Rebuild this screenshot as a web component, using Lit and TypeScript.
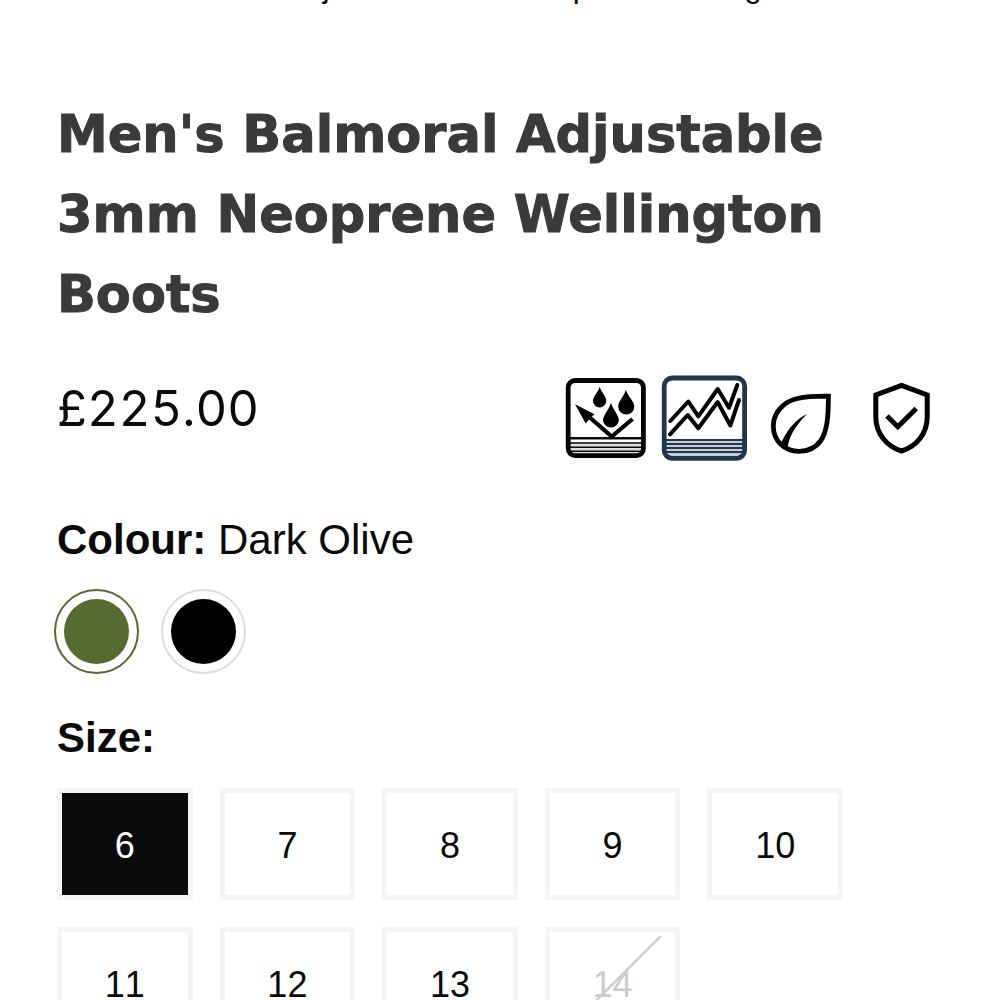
import { LitElement, html, css, svg } from "lit";
import { customElement, state } from "lit/decorators.js";

const COLOURS = [
  { name: "Dark Olive", cls: "olive" },
  { name: "Black", cls: "black" },
];

const SIZES = [
  { label: "6" }, { label: "7" }, { label: "8" }, { label: "9" }, { label: "10" },
  { label: "11" }, { label: "12" }, { label: "13" }, { label: "14", soldOut: true },
];

const waterproof = svg`
  <rect x="7" y="68" width="72" height="13" fill="#dcdcdc" />
  <path d="M5 69H80M5 73.3H80M5 77.3H80" stroke="#0a0a0a" stroke-width="1.4" />
  <path d="M5 64.3H80" stroke="#0a0a0a" stroke-width="2.6" />
  <rect x="5.2" y="6.5" width="75.2" height="75.2" rx="7" fill="none" stroke="#050505" stroke-width="4.8" />
  <path d="M36.7 12.7C38 18 43.3 22 43.3 27A6.6 6.4 0 0 1 30 27C30 22 35.4 18 36.7 12.7Z" />
  <path d="M62.9 15.7C64.5 22 71.3 27 71.3 32.6A8 7.8 0 0 1 55.2 32.6C55.2 27 61.3 22 62.9 15.7Z" />
  <path d="M48 28.7C49.6 35 55.9 41 55.9 46.6A8 7.8 0 0 1 40 46.6C40 41 46.4 35 48 28.7Z" />
  <path d="M12 30.3L31.5 40.2L27.8 43.2L22.7 49.5Z" />
  <path d="M25 42L48.7 62.5L69.5 45" fill="none" stroke="#000" stroke-width="4.2" />`;

const layers = svg`
  <rect x="5" y="66" width="77" height="17" fill="#c3ced8" />
  <path d="M5 66H82M5 70H82M5 74H82M5 78H82" stroke="#22384a" stroke-width="1.8" />
  <rect x="3.2" y="4" width="80.4" height="80.4" rx="8" fill="none" stroke="#20364a" stroke-width="4.8" />
  <path d="M9.3 47L27.3 27.5L37.3 42.3L56.7 15L68 33.7L76.3 11M9 60.3L26.7 41L37.3 54.3L56.7 28L69.3 51.5L78 26"
    fill="none" stroke="#000" stroke-width="4" stroke-linecap="round" stroke-linejoin="round" />`;

const leaf = svg`
  <path d="M69.4 22.2C42 22 30 25 22.5 33C17 38.5 14.3 44.5 14.3 52C14.3 67 25.5 77.3 40 77.3C49 77.3 56.5 74 61.5 67C68 58 69.4 44 69.4 22.2Z"
    fill="none" stroke="#000" stroke-width="4.8" />
  <path d="M48 40C38 45 30 53 23 67L20 71L28.5 75C29.5 64 35 53 48 40Z" />`;

const shield = svg`
  <path d="M44.5 11.4L70.2 21V43C70.2 59 60 72.5 44.5 77C29.2 72.5 18.8 59 18.8 43V21Z"
    fill="none" stroke="#000" stroke-width="5" />
  <path d="M30 42L40.8 52.8L59.2 34.4" fill="none" stroke="#000" stroke-width="5" />`;

const FEATURES = [
  { name: "Waterproof", art: waterproof },
  { name: "Insulated layers", art: layers },
  { name: "Eco friendly", art: leaf },
  { name: "Guaranteed", art: shield },
];

@customElement("app-root")
export class AppRoot extends LitElement {
  @state() private colour = "Dark Olive";
  @state() private size = "6";

  static styles = css`
    :host {
      display: block;
      height: 100vh;
      overflow: hidden;
      background: #fff;
      color: #0a0a0a;
      font-family: "Liberation Sans", Arial, sans-serif;
    }
    * { box-sizing: border-box; }
    .page { padding: 0 55px 0 57px; }
    .caption {
      margin: -31px 0 0;
      padding-right: 44px;
      font-size: 31px;
      line-height: 36px;
      text-align: center;
      white-space: nowrap;
    }
    h1 {
      margin: 90px 0 0;
      font-family: "DejaVu Sans", Verdana, sans-serif;
      font-weight: 700;
      font-size: 51px;
      line-height: 80px;
      color: #3a3a3b;
      -webkit-text-stroke: 1px #3a3a3b;
    }
    .summary {
      display: flex;
      justify-content: space-between;
      align-items: flex-start;
      margin-top: 39px;
    }
    .price {
      margin: 0;
      font-family: "Inter", sans-serif;
      font-size: 49px;
      line-height: 70px;
      font-variant-numeric: tabular-nums;
    }
    .features {
      display: flex;
      gap: 10px;
      margin: 0;
      padding: 0;
      list-style: none;
    }
    .features svg { display: block; width: 88px; height: 88px; }
    fieldset { margin: 0; padding: 0; border: 0; min-width: 0; }
    legend {
      padding: 0;
      font-size: 42px;
      line-height: 60px;
    }
    .colours { margin-top: 48px; }
    .swatches { display: flex; gap: 22px; margin: 19px 0 0 -3px; }
    .swatch {
      appearance: none;
      width: 85px;
      height: 85px;
      margin: 0;
      padding: 8px;
      border: 2px solid #dcdcdc;
      border-radius: 50%;
      background-clip: content-box;
    }
    .olive { background-color: #556b2f; }
    .olive:checked { border-color: #556b2f; }
    .black { background-color: #000; }
    .black:checked { border-color: #000; }
    .sizes { margin-top: 34px; }
    .grid {
      display: grid;
      grid-template-columns: repeat(5, 1fr);
      gap: 27px;
      margin: 20px 102px 0 0;
    }
    .size {
      position: relative;
      display: flex;
      align-items: center;
      justify-content: center;
      height: 112px;
      padding-top: 3px;
      border: 5px solid #f5f5f5;
      font-size: 36px;
      line-height: 48px;
      font-kerning: none;
    }
    .size.chosen { background: #0a0a0a; background-clip: padding-box; color: #fff; }
    .size.gone { color: #ccc; }
    .size input {
      position: absolute;
      inset: 0;
      width: 100%;
      height: 100%;
      margin: 0;
      opacity: 0;
    }
    .slash { position: absolute; inset: 0; width: 100%; height: 100%; }
  `;

  render() {
    return html`
      <main class="page">
        <p class="caption">Men's Balmoral Adjustable 3mm Neoprene Wellington Boots</p>
        <h1>Men's Balmoral Adjustable 3mm Neoprene Wellington Boots</h1>
        <div class="summary">
          <p class="price">£225.00</p>
          <ul class="features">
            ${FEATURES.map((f) => html`
              <li><svg viewBox="0 0 88 88" role="img" aria-label=${f.name}>${f.art}</svg></li>`)}
          </ul>
        </div>
        <fieldset class="colours">
          <legend><strong>Colour:</strong> ${this.colour}</legend>
          <div class="swatches">
            ${COLOURS.map((c) => html`
              <input class="swatch ${c.cls}" type="radio" name="colour" aria-label=${c.name}
                .checked=${this.colour === c.name} @change=${() => (this.colour = c.name)} />`)}
          </div>
        </fieldset>
        <fieldset class="sizes">
          <legend><strong>Size:</strong></legend>
          <div class="grid">
            ${SIZES.map((s) => html`
              <label class="size ${this.size === s.label ? "chosen" : ""} ${s.soldOut ? "gone" : ""}">
                <input type="radio" name="size" ?disabled=${s.soldOut}
                  .checked=${this.size === s.label} @change=${() => (this.size = s.label)} />
                <span>${s.label}</span>
                ${s.soldOut ? html`<svg class="slash" viewBox="0 0 126 102" aria-hidden="true">
                  <path d="M111 4L15 100" stroke="#ccc" stroke-width="2.5" /></svg>` : ""}
              </label>`)}
          </div>
        </fieldset>
      </main>
    `;
  }
}
